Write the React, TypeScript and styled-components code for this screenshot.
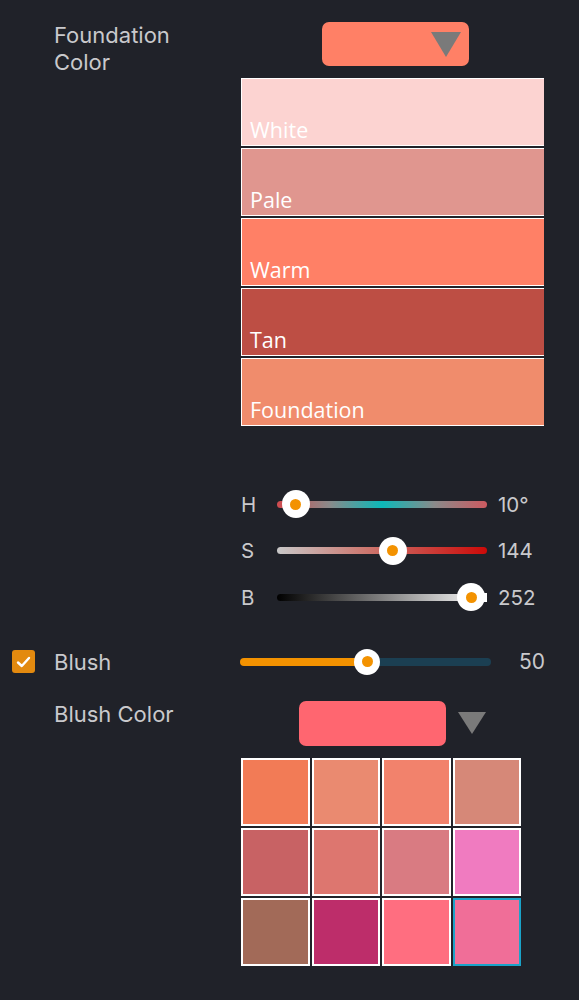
import React from "react";
import styled, { createGlobalStyle } from "styled-components";

const Global = createGlobalStyle`
  html, body { margin: 0; padding: 0; background: #202229; }
  body { font-family: Inter, "Liberation Sans", sans-serif; }
`;

const Page = styled.div`
  width: 579px;
  min-height: 1000px;
  background: #202229;
  padding-top: 22px;
  box-sizing: border-box;
  display: flex;
  flex-direction: column;
`;

const Row = styled.div<{ $mt?: number }>`
  display: grid;
  grid-template-columns: 241px 303px;
  align-items: start;
  margin-top: ${(p) => p.$mt || 0}px;
`;

const Label = styled.div`
  padding-left: 54px;
  color: #c9c9cc;
  font-size: 22px;
  line-height: 27px;
`;

const Center = styled.div`
  display: flex;
  justify-content: center;
  align-items: center;
  gap: 12px;
`;

const ColorButton = styled.div<{ $color: string; $w: number; $h: number; $shift?: number }>`
  width: ${(p) => p.$w}px;
  height: ${(p) => p.$h}px;
  border-radius: 7px;
  background: ${(p) => p.$color};
  display: flex;
  align-items: center;
  justify-content: flex-end;
  padding-right: 8px;
  box-sizing: border-box;
  margin-left: ${(p) => p.$shift || 0}px;
`;

const Caret = styled.div`
  width: 0;
  height: 0;
  border-left: 15px solid transparent;
  border-right: 15px solid transparent;
  border-top: 25px solid #7a7a7a;
`;

const SmallCaret = styled.div`
  width: 0;
  height: 0;
  border-left: 14px solid transparent;
  border-right: 14px solid transparent;
  border-top: 22px solid #7a7a7a;
`;

const SwatchList = styled.div`
  display: flex;
  flex-direction: column;
  gap: 2px;
  margin-top: 2px;
  margin-left: 241px;
  width: 303px;
`;

const Swatch = styled.div<{ $color: string }>`
  height: 68px;
  box-sizing: border-box;
  border: 1px solid #fff;
  border-right: none;
  background: ${(p) => p.$color};
  display: flex;
  align-items: flex-end;
  padding: 0 0 2px 8px;
  color: #fff;
  font-family: "Open Sans", "Noto Sans", sans-serif;
  font-size: 21.5px;
  line-height: 26px;
`;

const SliderBlock = styled.div`
  margin-top: 55px;
  margin-left: 241px;
  display: flex;
  flex-direction: column;
`;

const HsbRow = styled.div`
  display: grid;
  grid-template-columns: 25px 210px auto;
  align-items: center;
  column-gap: 11px;
  height: 46.5px;
  color: #c9c9cc;
  font-size: 20.5px;
`;

const Track = styled.div<{ $bg: string; $h?: number }>`
  position: relative;
  height: ${(p) => p.$h || 7}px;
  border-radius: 4px;
  background: ${(p) => p.$bg};
`;

const Thumb = styled.div<{ $size: number }>`
  position: absolute;
  top: 50%;
  width: ${(p) => p.$size}px;
  height: ${(p) => p.$size}px;
  border-radius: 50%;
  background: #fff;
  transform: translate(-50%, -50%);
  display: flex;
  align-items: center;
  justify-content: center;
  &::after {
    content: "";
    width: 11px;
    height: 11px;
    border-radius: 50%;
    background: #f39200;
  }
`;

const EndCap = styled.div`
  position: absolute;
  right: 0;
  top: -1px;
  width: 6px;
  height: 9px;
  background: #fff;
`;

const BlushRow = styled.div`
  margin-top: 21px;
  display: grid;
  grid-template-columns: 12px 23px 19px 186px 251px 1fr;
  align-items: center;
  height: 40px;
  color: #c9c9cc;
  font-size: 22px;
`;

const CheckBox = styled.div`
  grid-column: 2;
  width: 23px;
  height: 23px;
  border-radius: 3px;
  background: #e38a0f;
  display: flex;
  align-items: center;
  justify-content: center;
`;

const BlushLabel = styled.div`
  grid-column: 4;
`;

const BlushValue = styled.div`
  text-align: right;
  padding-right: 34px;
  font-size: 21px;
`;

const Grid = styled.div`
  margin-top: 12px;
  margin-left: 241px;
  width: 280px;
  display: grid;
  grid-template-columns: repeat(4, 1fr);
  gap: 2px;
`;

const Cell = styled.div<{ $color: string; $sel?: boolean }>`
  height: 68px;
  box-sizing: border-box;
  border: ${(p) => (p.$sel ? "2px solid #1aa3c8" : "2px solid #fff")};
  background: ${(p) => p.$color};
`;

const swatches = [
  ["White", "#fcd3d1"],
  ["Pale", "#e0968f"],
  ["Warm", "#ff8066"],
  ["Tan", "#bd4e44"],
  ["Foundation", "#f08c6c"],
];

const cells = [
  "#f27b56", "#ea8a70", "#f2826c", "#d68878",
  "#c86264", "#dd766f", "#d97b82", "#f07bc0",
  "#a26a58", "#bd2d6a", "#ff6e80", "#f06e98",
];

const sliders = [
  { l: "H", v: "10°", pct: 9, bg: "linear-gradient(90deg, #d04a4e 0%, #8a8a8a 25%, #0cb8b8 50%, #8a8a8a 75%, #cc5a60 100%)" },
  { l: "S", v: "144", pct: 55, bg: "linear-gradient(90deg, #c8c8c8 0%, #cc7c74 40%, #cc0a08 100%)" },
  { l: "B", v: "252", pct: 92.4, bg: "linear-gradient(90deg, #000 0%, #808080 50%, #fff 100%)" },
];

export default function App() {
  return (
    <>
      <Global />
      <Page>
        <Row>
          <Label>
            Foundation
            <br />
            Color
          </Label>
          <Center>
            <ColorButton $color="#ff8066" $w={147} $h={44} $shift={6}>
              <Caret />
            </ColorButton>
          </Center>
        </Row>
        <SwatchList>
          {swatches.map(([n, c]) => (
            <Swatch key={n} $color={c}>
              {n}
            </Swatch>
          ))}
        </SwatchList>
        <SliderBlock>
          {sliders.map((s) => (
            <HsbRow key={s.l}>
              <div>{s.l}</div>
              <Track $bg={s.bg}>
                {s.l === "B" && <EndCap />}
                <Thumb $size={28} style={{ left: `${s.pct}%` }} />
              </Track>
              <div>{s.v}</div>
            </HsbRow>
          ))}
        </SliderBlock>
        <BlushRow>
          <CheckBox>
            <svg width="15" height="12" viewBox="0 0 15 12">
              <path d="M2 6.5 L5.8 10 L13 2" fill="none" stroke="#fff" strokeWidth="2.4" strokeLinecap="round" strokeLinejoin="round" />
            </svg>
          </CheckBox>
          <BlushLabel>Blush</BlushLabel>
          <Track $bg="linear-gradient(90deg, #f39200 0%, #f39200 50%, #1b3f52 50%, #1b3f52 100%)" $h={8}>
            <Thumb $size={26} style={{ left: "50.6%" }} />
          </Track>
          <BlushValue>50</BlushValue>
        </BlushRow>
        <Row $mt={19}>
          <Label>Blush Color</Label>
          <Center>
            <ColorButton $color="#ff6670" $w={147} $h={45} />
            <SmallCaret />
          </Center>
        </Row>
        <Grid>
          {cells.map((c, i) => (
            <Cell key={i} $color={c} $sel={i === 11} />
          ))}
        </Grid>
      </Page>
    </>
  );
}
